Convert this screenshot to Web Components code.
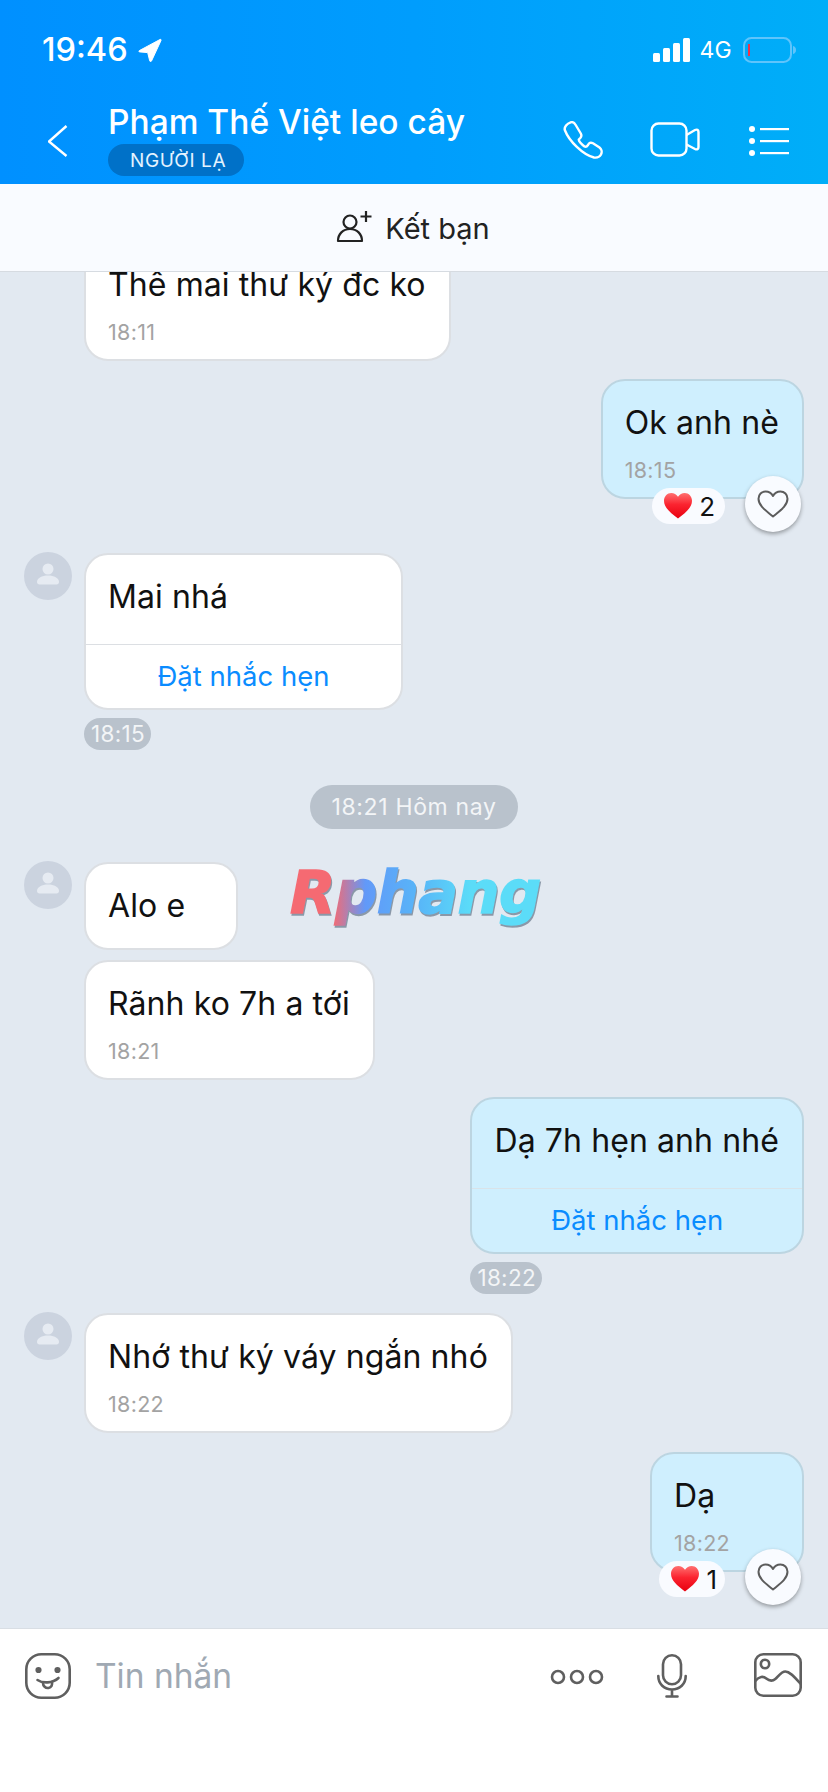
<!DOCTYPE html>
<html lang="vi"><head><meta charset="utf-8"><title>Chat</title>
<style>
html,body{margin:0;padding:0;height:100%}
body{font-family:Inter,"Noto Sans",sans-serif;width:828px;height:1792px;overflow:hidden;display:flex;flex-direction:column;background:#e2e9f1;color:#111}
</style></head><body>
<zl-header></zl-header>
<zl-friendbar></zl-friendbar>
<zl-chat>
  <zl-msg style="margin-top:-31px" avatar="none" time="18:11">Thê mai thư ký đc ko</zl-msg>
  <zl-msg style="margin-top:18px" side="out" time="18:15" reaction="2">Ok anh nè</zl-msg>
  <zl-msg style="margin-top:54px" avatar="show" reminder pill="18:15">Mai nhá</zl-msg>
  <zl-date style="margin-top:35px">18:21 Hôm nay</zl-date>
  <zl-msg style="margin-top:33px" avatar="show">Alo e</zl-msg>
  <zl-msg style="margin-top:10px" avatar="none" time="18:21">Rãnh ko 7h a tới</zl-msg>
  <zl-msg style="margin-top:17px" side="out" reminder pill="18:22">Dạ 7h hẹn anh nhé</zl-msg>
  <zl-msg style="margin-top:19px" avatar="show" time="18:22">Nhớ thư ký váy ngắn nhó</zl-msg>
  <zl-msg style="margin-top:19px" side="out" time="18:22" reaction="1">Dạ</zl-msg>
  <zl-watermark slot="overlay">Rphang</zl-watermark>
</zl-chat>
<zl-composer></zl-composer>
<script>
const def=(name,html)=>customElements.define(name,class extends HTMLElement{
  constructor(){super();this.attachShadow({mode:'open'}).innerHTML=html}
});
def('zl-header',`<style>
:host{display:block;height:184px;box-sizing:border-box;background:linear-gradient(90deg,#0090ff 0%,#009dfd 50%,#00aef8 100%);color:#fff}
.status{display:flex;align-items:center;height:100px;padding:0 32px 0 42px;box-sizing:border-box}
.time{font-size:32.5px;font-weight:500;line-height:40px}
.loc{margin-left:10px}
.sp{flex:1}
.net{font-size:23px;margin:0 11px 0 9px;line-height:30px;letter-spacing:.3px}
.nav{display:flex;height:102px;margin-top:-18px;position:relative}
.back{margin:43px 0 0 48px;flex:none;width:61px}
.title{flex:1;min-width:0;padding-top:20px}
h1{margin:0 0 0 -1px;font-size:33.5px;font-weight:500;line-height:40px;white-space:nowrap;letter-spacing:0}
.badge{display:inline-block;height:32px;line-height:33px;margin:0 0 0 -1px;padding:0 18px 0 22px;background:#0071c8;border-radius:16px;font-size:19px;color:#e4f3ff;letter-spacing:.6px;position:relative;top:2px}
.ic{position:absolute}
</style>
<div class="status"><span class="time">19:46</span>
<svg class="loc" width="24" height="24" viewBox="0 0 24 24"><path d="M1.500 12.500 22 1.500c.8-.4 1.400.2 1 1L13.500 23c-.5.9-1.600.8-1.800-.2l-2-8.200-8-.7c-1-.1-1.200-1-.2-1.400z" fill="#fff" stroke="#fff" stroke-width="1" stroke-linejoin="round"/></svg>
<span class="sp"></span>
<svg width="37" height="24" viewBox="0 0 37 24" fill="#fff"><rect x="0" y="15" width="7" height="9" rx="1.500"/><rect x="10" y="10" width="7" height="14" rx="1.500"/><rect x="20" y="5" width="7" height="19" rx="1.500"/><rect x="30" y="0" width="7" height="24" rx="1.500"/></svg>
<span class="net">4G</span>
<svg width="53" height="26" viewBox="0 0 53 26"><rect x="1" y="1" width="47" height="24" rx="7.500" fill="none" stroke="#5fc4fb" stroke-width="2"/><path d="M50 9c2 .6 3 2 3 4s-1 3.400-3 4z" fill="#5fc4fb"/><rect x="5" y="7" width="2" height="12" fill="#f0344a"/></svg>
</div>
<div class="nav">
<svg class="back" width="61" height="32" viewBox="0 0 61 32" style="height:32px"><path d="M18.500 1 1 16.500 18.500 31" fill="none" stroke="#fff" stroke-width="2.400"/></svg>
<div class="title"><h1>Phạm Thế Việt leo cây</h1><span class="badge">NGƯỜI LẠ</span></div>
<svg class="ic" style="left:563px;top:39px" width="40" height="38" viewBox="0 0 40 38"><path d="M7.700 1.300C10 .5 11.500 2 12.700 4L17.800 12.500C18.900 14.500 18.500 15.500 17.500 16.700L15.800 18.500C15.500 20 18.500 23.500 21.500 25.500C23 26.300 24 25.500 25 24C26 22 27.500 21 30 22.300L36.500 26.500C38.500 28 39.300 31 38 33.500C36.500 36 34 37 31 36.500C20 34 6 20 1.800 9C1 6 4 2.500 7.700 1.300Z" fill="none" stroke="#fff" stroke-width="2.400"/></svg>
<svg class="ic" style="left:650px;top:40px" width="50" height="36" viewBox="0 0 50 36"><rect x="1.500" y="1.500" width="35" height="32" rx="7" fill="none" stroke="#fff" stroke-width="2.400"/><path d="M36.500 13 45 8c2-1 3.500 0 3.500 2v15c0 2-1.500 3-3.500 2l-8.500-4.500" fill="none" stroke="#fff" stroke-width="2.400"/></svg>
<svg class="ic" style="left:748px;top:43px" width="42" height="32" viewBox="0 0 42 32" fill="#fff"><circle cx="4" cy="4" r="3"/><circle cx="4" cy="16" r="3"/><circle cx="4" cy="28" r="3"/><rect x="12" y="3" width="29" height="2.200"/><rect x="12" y="15" width="29" height="2.200"/><rect x="12" y="27" width="29" height="2.200"/></svg>
</div>`);
def('zl-friendbar',`<style>
:host{display:flex;align-items:center;justify-content:center;gap:13px;height:88px;box-sizing:border-box;background:#f9fbff;border-bottom:1px solid #d6dbe1;color:#222;font-size:29px;padding-top:1px;padding-right:2px}
svg{flex:none;margin-top:-3px}
</style>
<svg width="36" height="33" viewBox="0 0 36 33" fill="none" stroke="#222" stroke-width="2.200"><circle cx="14" cy="12" r="6.500"/><path d="M2 31c0-7 5-12 12-12s12 5 12 12z" stroke-linejoin="round"/><path d="M30 1v11M24.500 6.500h11"/></svg><span>Kết bạn</span>`);
def('zl-chat',`<style>
:host{display:flex;flex-direction:column;flex:1;min-height:0;overflow:hidden;position:relative;background:#e2e9f1}
</style><slot></slot><slot name="overlay"></slot>`);
customElements.define('zl-msg',class extends HTMLElement{
  constructor(){super();this.attachShadow({mode:'open'})}
  connectedCallback(){
    const out=this.getAttribute('side')==='out', av=this.getAttribute('avatar'), time=this.getAttribute('time'), pill=this.getAttribute('pill'), rem=this.hasAttribute('reminder'), rx=this.getAttribute('reaction');
    this.shadowRoot.innerHTML=`<style>
:host{display:flex;flex:none;justify-content:${out?'flex-end':'flex-start'};padding:0 ${out?'24px':'0'} 0 ${out?'0':'24px'}}
.av{flex:none;width:48px;height:48px;border-radius:50%;background:#cbd3df;margin-right:12px;margin-top:-1px}
.sp{flex:none;width:48px;margin-right:12px}
.col{display:flex;flex-direction:column;align-items:flex-start}
.b{position:relative;box-sizing:border-box;min-width:${rem?319:154}px;background:${out?'#cfeffe':'#fff'};border:2px solid ${out?'#bcd5e1':'#dcdfe3'};border-radius:24px;padding:22px 23px ${time?'12px':'22px'} 22px}
.t{font-size:32px;line-height:40px;white-space:nowrap;letter-spacing:.1px;color:#111}
.time{font-size:21.500px;line-height:30px;margin-top:12px;color:#a3a3a3;letter-spacing:.3px}
.rem{margin:27px -23px -22px -22px;border-top:1px solid ${out?'#d9e3e9':'#dcdfe3'};height:63px;line-height:63px;text-align:center;color:#0a8cff;font-size:27.500px}
.pill{margin-top:8px;height:32px;line-height:32px;padding:0 6px 0 7px;border-radius:16px;background:#b9c2cc;color:#f3f5f7;font-size:22.500px;letter-spacing:.3px}
.rx{position:absolute;right:77px;bottom:-27px;height:36px;display:flex;align-items:center;gap:7px;background:#f9fbff;border-radius:18px;padding:0 ${rx==='2'?'10px':'8px'} 0 12px;font-size:26px;color:#111}
.hb{position:absolute;right:1px;bottom:-35px;width:56px;height:56px;border-radius:50%;background:#f9fbff;box-shadow:0 2px 4px rgba(0,0,0,.35);display:flex;align-items:center;justify-content:center}
</style>
${av==='show'?`<div class="av"><svg width="48" height="48" viewBox="0 0 48 48" fill="#e6ebf2"><circle cx="24" cy="17" r="5.500"/><path d="M13 30c0-4 5-6.500 11-6.500S35 26 35 30c0 1.500-1 2.500-2.500 2.500h-17C14 32.500 13 31.500 13 30z"/></svg></div>`:av==='none'?'<div class="sp"></div>':''}
<div class="col"><div class="b"><div class="t"><slot></slot></div>
${time?`<div class="time">${time}</div>`:''}
${rem?`<div class="rem">Đặt nhắc hẹn</div>`:''}
${rx?`<div class="rx"><svg width="28" height="26" viewBox="0 0 28 26"><defs><linearGradient id="g" x1="0" y1="0" x2="0" y2="1"><stop offset="0" stop-color="#ff7070"/><stop offset=".45" stop-color="#fb2430"/><stop offset="1" stop-color="#e8000f"/></linearGradient></defs><path d="M14 25.500C6 19.500 0 14.500 0 7.800 0 3.400 3.200 0 7.300 0 10 0 12.500 1.400 14 3.800 15.500 1.400 18 0 20.700 0 24.800 0 28 3.400 28 7.800c0 6.700-6 11.700-14 17.700z" fill="url(#g)"/></svg><span>${rx}</span></div>
<div class="hb"><svg width="32" height="28" viewBox="0 0 32 28"><path d="M16 26.500C8 20 1.500 15.500 1.500 8.800 1.500 4.600 4.600 1.500 8.600 1.500 11.800 1.500 14.500 3.300 16 6 17.500 3.300 20.200 1.500 23.400 1.500 27.400 1.500 30.500 4.600 30.500 8.800 30.500 15.500 24 20 16 26.500z" fill="none" stroke="#5c5c5c" stroke-width="2" stroke-linejoin="round"/></svg></div>`:''}
</div>${pill?`<div class="pill">${pill}</div>`:''}</div>`;
  }
});
def('zl-date',`<style>
:host{display:block;flex:none;align-self:center;height:44px;line-height:44px;padding:0 21px;border-radius:22px;background:#b9c2cc;color:#f3f5f7;font-size:23px;letter-spacing:.65px}
</style><slot></slot>`);
def('zl-watermark',`<style>
:host{position:absolute;left:290px;top:588px;display:block;line-height:66px;font-family:"DejaVu Sans",sans-serif;font-weight:700;font-style:italic;font-size:59px;letter-spacing:-.5px;filter:drop-shadow(1px 2px 0 #8a98a8)}
span{background:linear-gradient(90deg,#f56a72 0%,#f56a72 17%,#6299f8 30%,#58b4f8 50%,#5bdcf8 72%,#5bdcf8 100%);-webkit-background-clip:text;background-clip:text;color:transparent;-webkit-text-stroke:1.500px transparent}
</style><span><slot></slot></span>`);
def('zl-composer',`<style>
:host{display:flex;flex:none;align-items:flex-start;height:164px;box-sizing:border-box;background:#fff;border-top:1px solid #d9dee4;padding:24px 26px 0 25px}
.ph{font-size:33.500px;line-height:46px;color:#a0a9b3;margin-left:24px;flex:1}
svg{flex:none;fill:none;stroke:#5f5f5f;stroke-width:2.600;stroke-linecap:round;stroke-linejoin:round}
</style>
<svg width="46" height="46" viewBox="0 0 46 46"><rect x="1.300" y="1.300" width="43.400" height="43.400" rx="15"/><circle cx="13.500" cy="17" r="1.800" fill="#5f5f5f"/><circle cx="32.500" cy="17" r="1.800" fill="#5f5f5f"/><path d="M12.500 27c5 3.500 15 3.500 21-2"/><path d="M18 30c0 3 2.500 5.500 5.500 5 3-.5 4-3 3.500-6" /></svg>
<span class="ph">Tin nhắn</span>
<svg style="margin:16px 53px 0 0" width="54" height="16" viewBox="0 0 54 16"><circle cx="8" cy="8" r="6"/><circle cx="27" cy="8" r="6"/><circle cx="46" cy="8" r="6"/></svg>
<svg style="margin:1px 67px 0 0" width="30" height="44" viewBox="0 0 30 44"><rect x="6" y="1.300" width="18" height="29" rx="9"/><path d="M1.300 22c0 8 6 13.500 13.700 13.500S28.700 30 28.700 22M15 35.500v6.500M9.500 42.500h11"/></svg>
<svg width="48" height="44" viewBox="0 0 48 44"><rect x="1.300" y="1.300" width="45.400" height="41.400" rx="8"/><circle cx="11" cy="11" r="4.200"/><path d="M1.300 28c4-5 8-5 11-2.500s6 3 9 .5 6-7.500 10-7.500 8 4 15 12"/></svg>`);
</script>
</body></html>
